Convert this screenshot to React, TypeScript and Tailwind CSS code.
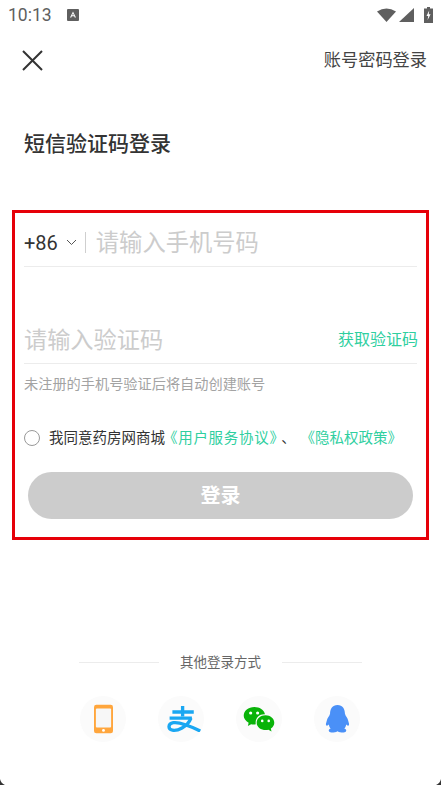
const cjk = "font-['Roboto','Noto_Sans_CJK_SC',sans-serif]";

function StatusBar() {
  return (
    <div className="flex h-[30px] items-center justify-between pl-2 pr-[8px] text-[#5f5f5f]">
      <div className="flex items-center">
        <span className="text-[17.500px] leading-[30px] font-['Roboto',sans-serif]">10:13</span>
        <svg width="12" height="12" viewBox="0 0 12 12" className="ml-[15px]">
          <rect width="12" height="12" rx="1" fill="#5f5f5f" />
          <path d="M3 8.500 6 2.600 9 8.500H7.700L7.200 7.300H4.800L4.300 8.500ZM5.200 6.300H6.800L6 4.600Z" fill="#fff" />
        </svg>
      </div>
      <div className="flex items-center">
        <svg width="19" height="14" viewBox="0 0 19 14"><path d="M0 3.500Q9.500-2.500 19 3.500L9.500 14Z" fill="#5f5f5f" /></svg>
        <svg width="15" height="14" viewBox="0 0 15 14" className="ml-[3px]"><path d="M15 0V14H0Z" fill="#5f5f5f" /></svg>
        <svg width="9" height="16" viewBox="0 0 9 16" className="ml-[10px]">
          <path d="M3 0H6V1.500H9V16H0V1.500H3Z" fill="#5f5f5f" />
          <path d="M5.200 3.500 2.500 9H4.200L3.600 13 6.600 7.300H4.800Z" fill="#fff" />
        </svg>
      </div>
    </div>
  );
}

function Underlined({ children }: { children: React.ReactNode }) {
  return <div className="flex h-[48px] items-center justify-between border-b border-[#ececec]">{children}</div>;
}

export default function App() {
  return (
    <div className={`relative flex h-[785px] w-[441px] flex-col overflow-hidden bg-white ${cjk}`}>
      <StatusBar />
      <div className="mt-[11px] flex h-[38px] items-center justify-between pl-[22px] pr-[14px]">
        <svg width="21" height="21" viewBox="0 0 21 21" fill="none" stroke="#333" strokeWidth="2">
          <path d="M1 1 20 20M20 1 1 20" />
        </svg>
        <span className="text-[17.200px] leading-[24px] text-[#444]">账号密码登录</span>
      </div>
      <h1 className="mt-[49px] pl-6 text-[21px] font-medium leading-[32px] text-[#333]">短信验证码登录</h1>

      <div className="mx-3 mt-[50px] flex h-[330px] flex-col border-[3px] border-[#e60008] px-[9px] pt-[6px]">
        <Underlined>
          <div className="flex items-center">
            <span className="text-[20px] leading-[28px] text-[#333] font-['Roboto',sans-serif]">+86</span>
            <svg width="11" height="7" viewBox="0 0 11 7" fill="none" stroke="#555" strokeWidth="1" className="ml-2">
              <path d="M1 1 5.500 5.500 10 1" />
            </svg>
            <span className="ml-[8px] h-[21px] w-px bg-[#cfcfcf]" />
            <span className="ml-[10px] text-[23.300px] leading-[32px] text-[#cccccc]">请输入手机号码</span>
          </div>
        </Underlined>
        <div className="mt-[49px]">
          <Underlined>
            <span className="text-[23.200px] leading-[32px] text-[#cccccc]">请输入验证码</span>
            <span className="-mr-px text-[16px] leading-[24px] text-[#2fcf9f]">获取验证码</span>
          </Underlined>
        </div>
        <p className="mt-[10px] text-[14.200px] leading-[20px] text-[#a3a3a3]">未注册的手机号验证后将自动创建账号</p>
        <div className="mt-[33px] flex items-center">
          <span className="h-4 w-4 rounded-full border border-[#999]" />
          <span className="ml-[9px] whitespace-nowrap pt-[2px] text-[14.500px] leading-[20px] text-[#333]">
            我同意药房网商城
            <span className="-ml-[2px] tracking-[0.7px] text-[#2fcf9f]">《用户服务协议》</span>
            <span className="mx-[4px]">、</span>
            <span className="ml-[8px] text-[#2fcf9f]">《隐私权政策》</span>
          </span>
        </div>
        <button className="mx-1 mt-[23px] flex h-[47px] items-center justify-center rounded-full bg-[#cccccc] text-[20px] font-bold text-white">
          登录
        </button>
      </div>

      <div className="mt-[112px] flex items-center justify-center">
        <span className="h-px w-[80px] bg-[#ececec]" />
        <span className="mx-[21px] text-[13.500px] leading-[20px] text-[#666]">其他登录方式</span>
        <span className="h-px w-[80px] bg-[#ececec]" />
      </div>

      <div className="mt-[24px] flex justify-center gap-[32px] pr-px">
        <div className="flex h-[46px] w-[46px] items-center justify-center rounded-full bg-[#fbfbfb]">
          <svg width="19" height="30" viewBox="0 0 20 30">
            <rect width="20" height="30" rx="2.500" fill="#ffa63d" />
            <rect x="2" y="4" width="16" height="20" rx="1" fill="#f7f7f7" />
            <circle cx="10" cy="27" r="1.500" fill="#fff" />
          </svg>
        </div>
        <div className="flex h-[46px] w-[46px] items-center justify-center rounded-full bg-[#fbfbfb]">
          <svg width="36" height="26" viewBox="0 0 37 28" fill="none" stroke="#1aa7f2" strokeWidth="3.600" className="ml-[6px]">
            <path d="M17 0V11M6 6.500H29M3 13H27" />
            <path d="M26 13C22 23 11 27 6 26 1 25 1 19 7 18 14 17 24 21 36 27" />
          </svg>
        </div>
        <div className="flex h-[46px] w-[46px] items-center justify-center rounded-full bg-[#fbfbfb]">
          <svg width="32" height="25" viewBox="0 0 33 27">
            <path d="M11.500 0C17 0 22 3 23 8 17 7.500 12 12 13 18.500 11.500 19 10 19 8 18.500L4.500 20.500 5.300 17C2 15 0 12.500 0 9.500 0 4 5 0 11.500 0Z" fill="#09b309" />
            <circle cx="7.500" cy="6.500" r="1.700" fill="#fff" />
            <circle cx="15" cy="6.500" r="1.700" fill="#fff" />
            <path d="M23.500 9C28.800 9 33 12.600 33 17 33 19.600 31.500 21.800 29.300 23.300L30 26.500 26.700 24.500C21 26 14 23 14 17 14 12.600 18.200 9 23.500 9Z" fill="#09b309" />
            <circle cx="20" cy="15" r="1.400" fill="#fff" />
            <circle cx="27" cy="15" r="1.400" fill="#fff" />
          </svg>
        </div>
        <div className="flex h-[46px] w-[46px] items-center justify-center rounded-full bg-[#fbfbfb]">
          <svg width="25" height="28" viewBox="0 0 26 30">
            <path d="M13 0C18.500 0 20.800 4 21 9.500 21.500 12 24 14 24.500 17 25 19 26 21 25 22 24 22.500 22.800 21.500 22.300 21 22 23 21.500 24 20.300 25.300 22 26 23 27 22 28.500 20.500 30 16.500 30 13 28 9.500 30 5.500 30 4 28.500 3 27 4 26 5.700 25.300 4.500 24 4 23 3.700 21 3.200 21.500 2 22.500 1 22 0 21 1 19 1.500 17 2 14 4.500 12 5 9.500 5.200 4 7.500 0 13 0Z" fill="#4a90f7" />
          </svg>
        </div>
      </div>

      <svg width="6" height="6" viewBox="0 0 6 6" className="absolute bottom-0 left-0"><path d="M0 0Q1 4.500 5 6H0Z" fill="#333" /></svg>
      <svg width="6" height="6" viewBox="0 0 6 6" className="absolute bottom-0 right-0"><path d="M6 0Q5 4.500 1 6H6Z" fill="#333" /></svg>
    </div>
  );
}
